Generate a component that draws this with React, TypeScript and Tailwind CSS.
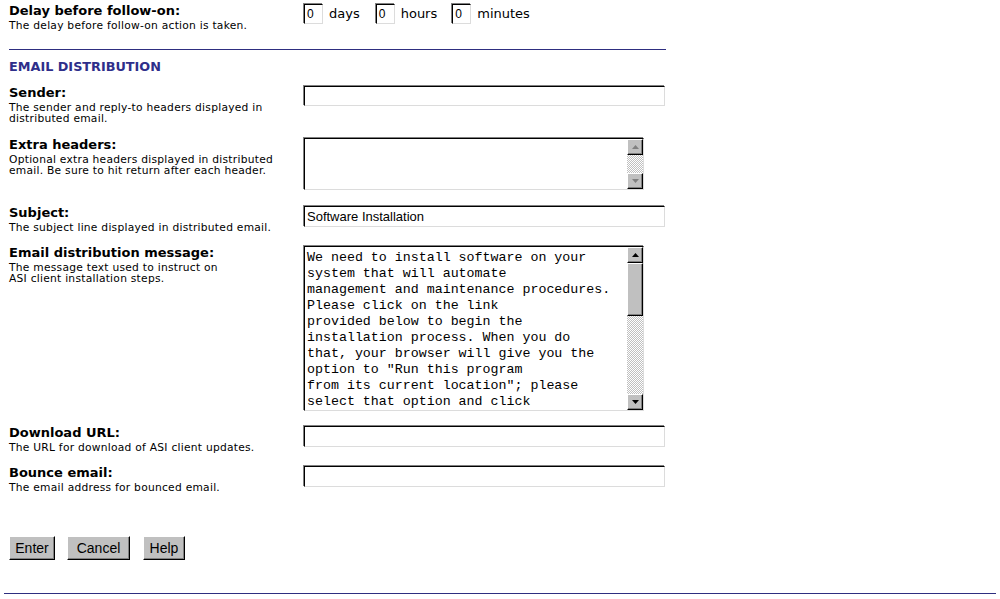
import React from "react"

const inputBox =
  "border border-t-black border-l-black border-b-[#dcdcdc] border-r-[#dcdcdc] shadow-[-1px_-1px_0_0_#808080] bg-white"

function Arrow({ up, dim }: { up?: boolean; dim?: boolean }) {
  return (
    <svg width="7" height="4" viewBox="0 0 7 4">
      <polygon
        points={up ? "3.5,0 7,4 0,4" : "0,0 7,0 3.5,4"}
        fill={dim ? "#808080" : "#000"}
      />
    </svg>
  )
}

function ScrollBtn({ up, dim }: { up?: boolean; dim?: boolean }) {
  return (
    <div className="h-[16px] w-[16px] shrink-0 bg-[#c0c0c0] border border-t-white border-l-white border-b-black border-r-black shadow-[inset_-1px_-1px_0_#808080] flex items-center justify-center">
      <Arrow up={up} dim={dim} />
    </div>
  )
}

function Scrollbar({ thumb, dim }: { thumb?: number; dim?: boolean }) {
  return (
    <div className="w-[16px] h-full flex flex-col shrink-0">
      <ScrollBtn up dim={dim} />
      <div className="flex-1 flex flex-col bg-[repeating-conic-gradient(#c0c0c0_0_25%,#ffffff_0_50%)] bg-[length:2px_2px]">
        {thumb ? (
          <div
            className="w-[16px] bg-[#c0c0c0] border border-t-white border-l-white border-b-black border-r-black shadow-[inset_-1px_-1px_0_#808080]"
            style={{ height: thumb }}
          />
        ) : null}
      </div>
      <ScrollBtn dim={dim} />
    </div>
  )
}

function Label({ title, children }: { title: string; children?: React.ReactNode }) {
  return (
    <div className="w-[295px] shrink-0">
      <div className="text-[13px] leading-[16px] font-bold">{title}</div>
      <div className="text-[10.7px] leading-[11px] tracking-[0.25px] mt-[1px]">{children}</div>
    </div>
  )
}

function SmallBox() {
  return (
    <div className={`${inputBox} w-[19px] h-[20px] text-[12px] leading-[18px] pl-[2px] font-['Liberation_Sans',sans-serif]`}>
      0
    </div>
  )
}

function RaisedButton({ label, w }: { label: string; w: string }) {
  return (
    <div
      className={`${w} h-[24px] bg-[#c0c0c0] border border-t-white border-l-white border-b-black border-r-black shadow-[inset_-1px_-1px_0_#808080] flex items-center justify-center text-[14px] font-['Liberation_Sans',sans-serif]`}
    >
      {label}
    </div>
  )
}

const message = `We need to install software on your
system that will automate
management and maintenance procedures.
Please click on the link
provided below to begin the
installation process. When you do
that, your browser will give you the
option to "Run this program
from its current location"; please
select that option and click`

export default function App() {
  return (
    <div className="w-[1000px] h-[599px] bg-white text-black font-['DejaVu_Sans','Verdana',sans-serif] overflow-hidden flex flex-col">
      <div className="pl-[9px] pt-[3px] w-[666px]">
        {/* delay */}
        <div className="flex h-[46px]">
          <Label title="Delay before follow-on:">The delay before follow-on action is taken.</Label>
          <div className="flex items-center h-[20px] mt-[1px] text-[13px]">
            <SmallBox />
            <span className="ml-[6px] mr-[16px]">days</span>
            <SmallBox />
            <span className="ml-[6px] mr-[15px]">hours</span>
            <SmallBox />
            <span className="ml-[6px]">minutes</span>
          </div>
        </div>
        <div className="h-px bg-[#2e2e80]" />

        <div className="mt-[9px] h-[26px] text-[12.8px] leading-[15px] font-bold text-[#2e2e8a]">
          EMAIL DISTRIBUTION
        </div>

        {/* sender */}
        <div className="flex h-[52px]">
          <Label title="Sender:">
            The sender and reply-to headers displayed in
            <br />
            distributed email.
          </Label>
          <div className={`${inputBox} w-[361px] h-[20px] mt-[1px]`} />
        </div>

        {/* extra headers */}
        <div className="flex h-[68px]">
          <Label title="Extra headers:">
            Optional extra headers displayed in distributed
            <br />
            email. Be sure to hit return after each header.
          </Label>
          <div className={`${inputBox} w-[340px] h-[52px] mt-[1px] flex`}>
            <div className="flex-1" />
            <Scrollbar dim />
          </div>
        </div>

        {/* subject */}
        <div className="flex h-[40px]">
          <Label title="Subject:">The subject line displayed in distributed email.</Label>
          <div className={`${inputBox} w-[361px] h-[21px] mt-[1px] pl-[2px] text-[13px] leading-[19px] font-['Liberation_Sans',sans-serif]`}>
            Software Installation
          </div>
        </div>

        {/* message */}
        <div className="flex h-[180px]">
          <Label title="Email distribution message:">
            The message text used to instruct on
            <br />
            ASI client installation steps.
          </Label>
          <div className={`${inputBox} w-[340px] h-[165px] mt-[1px] flex`}>
            <div className="flex-1 overflow-hidden whitespace-pre pl-[2px] pt-[3px] text-[13.3px] leading-[16px] font-['Liberation_Mono',monospace]">
              {message}
            </div>
            <Scrollbar thumb={53} />
          </div>
        </div>

        {/* download */}
        <div className="flex h-[40px]">
          <Label title="Download URL:">The URL for download of ASI client updates.</Label>
          <div className={`${inputBox} w-[361px] h-[21px] mt-[1px]`} />
        </div>

        {/* bounce */}
        <div className="flex h-[71px]">
          <Label title="Bounce email:">The email address for bounced email.</Label>
          <div className={`${inputBox} w-[361px] h-[21px] mt-[1px]`} />
        </div>

        <div className="flex">
          <RaisedButton label="Enter" w="w-[46px]" />
          <div className="w-[12px]" />
          <RaisedButton label="Cancel" w="w-[63px]" />
          <div className="w-[13px]" />
          <RaisedButton label="Help" w="w-[42px]" />
        </div>
      </div>
      <div className="mt-[33px] mx-[4px] h-px bg-[#2e2e80]" />
    </div>
  )
}
